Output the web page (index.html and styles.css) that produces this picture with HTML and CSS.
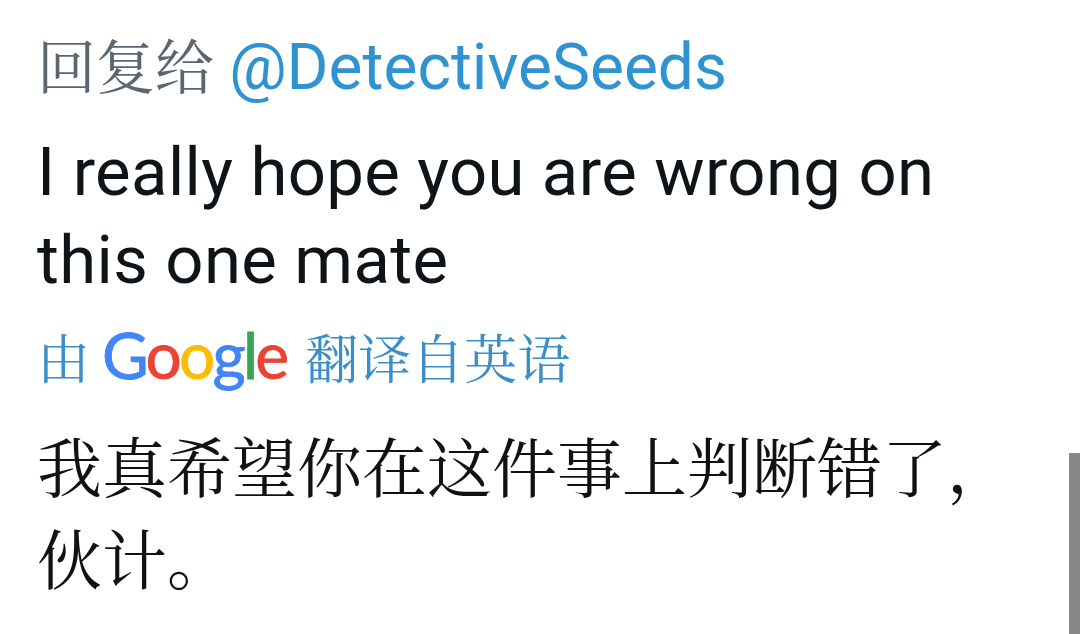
FILE: index.html
```html
<!DOCTYPE html>
<html lang="zh-CN">
<head>
<meta charset="utf-8">
<link rel="stylesheet" href="styles.css">
</head>
<body>
<main class="tweet">
  <div class="reply-to"><span class="reply-label">回复给</span> <span class="handle">@DetectiveSeeds</span></div>
  <p class="body-en">I really hope you are wrong on this one mate</p>
  <div class="translated">
    <span class="by">由</span>
    <span class="google"><span class="g-blue">G</span><span class="g-red">o</span><span class="g-yellow">o</span><span class="g-blue">g</span><span class="g-green">l</span><span class="g-red">e</span></span>
    <span class="by">翻译自英语</span>
  </div>
  <p class="body-zh">我真希望你在这件事上判断错了，伙计。</p>
</main>
<div class="scrollbar"></div>
</body>
</html>
```
FILE: styles.css
```css
html, body {
  margin: 0;
  padding: 0;
  background: #ffffff;
  width: 1080px;
  height: 634px;
  overflow: hidden;
}
.tweet {
  padding: 28px 0 0 37px;
  width: 1010px;
}
.reply-to {
  font-family: "Noto Serif CJK SC", "Noto Sans CJK SC", serif;
  font-size: 59px;
  line-height: 72px;
  color: #5b6670;
  white-space: nowrap;
}
.handle {
  font-family: Roboto, "Noto Sans CJK SC", sans-serif;
  font-size: 64px;
  color: #2f93d2;
}
.body-en {
  margin: 24px 0 0;
  font-family: Roboto, sans-serif;
  font-size: 67px;
  line-height: 88px;
  letter-spacing: 0.4px;
  color: #0f1419;
  width: 940px;
}
.translated {
  margin-top: 16px;
  display: flex;
  align-items: baseline;
  gap: 14px;
  font-family: "Noto Serif CJK SC", "Noto Sans CJK SC", serif;
  font-size: 53px;
  line-height: 70px;
  color: #3a8fc8;
}
.google {
  margin-left: -2px;
  margin-right: 5px;
  font-family: Lato, sans-serif;
  font-weight: 400;
  font-size: 64px;
  letter-spacing: -2.8px;
  -webkit-text-stroke: 0.8px currentColor;
}
.g-blue { color: #4285f4; }
.g-red { color: #ea4335; }
.g-yellow { color: #fbbc05; }
.g-green { color: #34a853; }
.body-zh {
  margin: 27px 0 0;
  font-family: "Noto Serif CJK SC", "Noto Sans CJK SC", serif;
  font-size: 65px;
  line-height: 92px;
  color: #111111;
  width: 1010px;
}
.scrollbar {
  position: absolute;
  right: 0;
  top: 453px;
  width: 11px;
  height: 181px;
  background: #888888;
}
```
